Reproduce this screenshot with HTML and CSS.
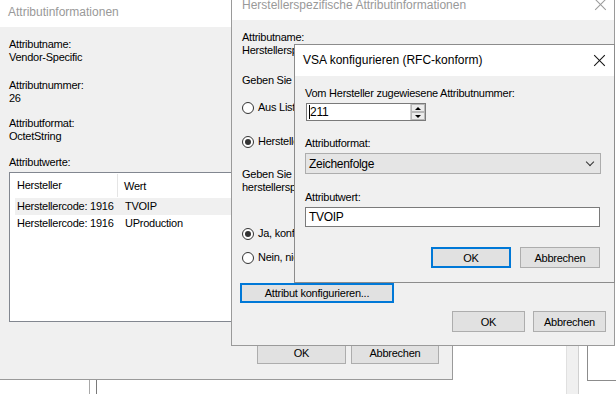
FILE: index.html
```html
<!DOCTYPE html>
<html lang="de">
<head>
<meta charset="utf-8">
<title>VSA konfigurieren</title>
<link rel="stylesheet" href="styles.css">
</head>
<body>
<div class="desk">
  <div class="deco deco-a"></div>
  <div class="deco deco-b"></div>
  <div class="deco deco-c"></div>

  <section class="win win1">
    <header class="title inactive">Attributinformationen</header>
    <div class="body body1">
      <div class="group"><div>Attributname:</div><div>Vendor-Specific</div></div>
      <div class="group g2"><div>Attributnummer:</div><div>26</div></div>
      <div class="group g3"><div>Attributformat:</div><div>OctetString</div></div>
      <div class="group g4"><div>Attributwerte:</div></div>
      <div class="listbox">
        <div class="lv-head"><span class="c1 hsep">Hersteller</span><span class="c2">Wert</span></div>
        <div class="lv-row sel"><span class="c1">Herstellercode: 1916</span><span class="c2">TVOIP</span></div>
        <div class="lv-row"><span class="c1">Herstellercode: 1916</span><span class="c2">UProduction</span></div>
      </div>
      <div class="btnrow row1">
        <button class="btn w89">OK</button>
        <button class="btn w88">Abbrechen</button>
      </div>
    </div>
  </section>

  <section class="win win2">
    <header class="title inactive">Herstellerspezifische Attributinformationen<span class="close dim"></span></header>
    <div class="body body2">
      <div class="group"><div>Attributname:</div><div>Herstellerspezifisch</div></div>
      <div class="line l-geben1">Geben Sie den Hersteller an.</div>
      <label class="radio r1"><span class="dot"></span>Aus Liste</label>
      <label class="radio r2"><span class="dot on"></span>Hersteller</label>
      <div class="group l-geben2"><div>Geben Sie an, ob</div><div>herstellerspezifisch</div></div>
      <label class="radio r3"><span class="dot on"></span>Ja, konform</label>
      <label class="radio r4"><span class="dot"></span>Nein, nicht</label>
      <button class="btn focus konfig">Attribut konfigurieren...</button>
      <div class="btnrow row2">
        <button class="btn w73">OK</button>
        <button class="btn w73">Abbrechen</button>
      </div>
    </div>
  </section>

  <section class="win win3">
    <header class="title active">VSA konfigurieren (RFC-konform)<span class="close"></span></header>
    <div class="body body3">
      <div class="line">Vom Hersteller zugewiesene Attributnummer:</div>
      <div class="spin">
        <span class="spin-val"><span class="caret"></span>211</span>
        <span class="spin-btns"><span class="sb up"></span><span class="sb down"></span></span>
      </div>
      <div class="line gap16">Attributformat:</div>
      <div class="combo"><span>Zeichenfolge</span><span class="chev"></span></div>
      <div class="line gap17">Attributwert:</div>
      <div class="textbox">TVOIP</div>
      <div class="btnrow row3">
        <button class="btn focus w80">OK</button>
        <button class="btn w80">Abbrechen</button>
      </div>
    </div>
  </section>
</div>
</body>
</html>
```

FILE: styles.css
```css
* { box-sizing: border-box; }
html, body { margin: 0; padding: 0; }
body {
  width: 616px;
  height: 394px;
  overflow: hidden;
  background: #ffffff;
  font-family: "Liberation Sans", Arial, sans-serif;
  font-size: 11px;
  letter-spacing: -0.25px;
  color: #000;
}
.desk { position: relative; width: 616px; height: 394px; overflow: hidden; }

.deco { position: absolute; }
.deco-a { left: 89px; top: 380px; width: 8px; height: 20px; border-left: 1px solid #a8a8a8; border-right: 1px solid #7a7a7a; background: #fff; }
.deco-b { left: 566px; top: 346px; width: 13px; height: 60px; border-left: 1px solid #e0e0e0; border-right: 1px solid #d0d0d0; background: #f0f0f0; }
.deco-c { left: 587px; top: 346px; width: 40px; height: 35px; border-left: 1px solid #8c8c8c; border-bottom: 1px solid #8c8c8c; background: #fff; }

.win {
  position: absolute;
  display: flex;
  flex-direction: column;
  border: 1px solid #9a9a9a;
  background: #f0f0f0;
}
.title {
  position: relative;
  background: #fff;
  font-size: 12px;
  letter-spacing: 0;
  white-space: nowrap;
  flex: none;
}
.title.inactive { color: #999; }
.title.active { color: #000; }
.body { flex: 1; display: flex; flex-direction: column; align-items: flex-start; white-space: nowrap; }
.line, .group div { line-height: 13px; height: 13px; }

.close { position: absolute; width: 11px; height: 11px; }
.close::before, .close::after {
  content: ""; position: absolute; left: -2px; top: 5px; width: 15px; height: 1px; background: #111;
}
.close::before { transform: rotate(45deg); }
.close::after { transform: rotate(-45deg); }
.close.dim::before, .close.dim::after { background: #999; }

/* window 1 */
.win1 { left: -8px; top: -4px; width: 461px; height: 384px; }
.win1 .title { height: 30px; line-height: 26px; padding-left: 15px; padding-top: 2px; }
.body1 { padding: 11px 13px 0 16px; }
.g2 { margin-top: 15px; }
.g3 { margin-top: 12px; }
.g4 { margin-top: 13px; }
.listbox {
  margin-top: 3px;
  width: 330px;
  height: 150px;
  background: #fff;
  border: 1px solid #828790;
  flex: none;
}
.lv-head { display: flex; height: 25px; align-items: center; padding-left: 7px; }
.lv-head .c1 { width: 101px; height: 23px; line-height: 23px; border-right: 1px solid #e5e5e5; }
.lv-head .c2 { padding-left: 6px; }
.lv-row { display: flex; height: 17px; line-height: 17px; margin-left: 5px; padding-left: 2px; }
.lv-row.sel { background: #f0f0f0; }
.lv-row .c1 { width: 101px; }
.lv-row .c2 { padding-left: 7px; }
.btnrow { display: flex; align-self: stretch; justify-content: flex-end; }
.row1 { margin-top: 19px; gap: 5px; }
.row1 .btn { height: 23px; }

.btn {
  font-family: inherit;
  font-size: 11px;
  letter-spacing: -0.25px;
  color: #000;
  background: #e1e1e1;
  border: 1px solid #adadad;
  padding: 0;
  margin: 0;
  height: 21px;
}
.btn.focus { border: 2px solid #0078d7; }
.w89 { width: 89px; }
.w88 { width: 88px; }
.w73 { width: 73px; }
.w80 { width: 80px; }

/* window 2 */
.win2 { left: 231px; top: -10px; width: 384px; height: 356px; }
.win2 .title { height: 29px; line-height: 29px; padding-left: 10px; padding-top: 0; }
.win2 .close { right: 8px; top: 8px; }
.body2 { padding: 11px 8px 0 10px; }
.l-geben1 { margin-top: 17px; }
.radio { display: flex; align-items: center; height: 13px; line-height: 13px; }
.dot {
  width: 12px; height: 12px; border: 1px solid #333; border-radius: 50%; background: #fff;
  margin-right: 4px; position: relative; flex: none;
}
.dot.on::after {
  content: ""; position: absolute; left: 2px; top: 2px; width: 6px; height: 6px; border-radius: 50%; background: #333;
}
.r1 { margin-top: 14px; }
.r2 { margin-top: 21px; }
.l-geben2 { margin-top: 20px; }
.r3 { margin-top: 33px; }
.r4 { margin-top: 11px; }
.konfig { margin-top: 19px; margin-left: -2px; width: 154px; height: 20px; }
.row2 { margin-top: 8px; gap: 8px; }

/* window 3 */
.win3 { left: 294px; top: 44px; width: 321px; height: 239px; border-color: #8c8c8c; }
.win3 .title { height: 31px; line-height: 31px; padding-left: 8px; }
.win3 .close { right: 9px; top: 10px; }
.body3 { padding: 11px 14px 0 10px; }
.spin {
  margin-top: 3px; margin-left: 1px; width: 120px; height: 18px;
  border: 1px solid #7a7a7a; background: #fff; display: flex;
}
.spin-val { flex: 1; position: relative; padding-left: 3px; line-height: 16px; font-size: 12px; }
.caret { position: absolute; left: 2px; top: 1px; width: 1px; height: 14px; background: #000; }
.spin-btns { width: 15px; display: flex; flex-direction: column; border-left: 1px solid #d0d0d0; }
.sb { flex: 1; background: #ececec; border: 1px solid #b8b8b8; position: relative; }
.sb::after { content: ""; position: absolute; left: 3px; width: 0; height: 0; border-left: 3px solid transparent; border-right: 3px solid transparent; }
.sb.up::after { top: 2px; border-bottom: 3px solid #000; }
.sb.down::after { top: 2px; border-top: 3px solid #000; }
.gap16 { margin-top: 16px; }
.gap17 { margin-top: 17px; }
.combo {
  margin-top: 3px; width: 296px; height: 21px;
  background: #e5e5e5; border: 1px solid #adadad;
  display: flex; align-items: center; justify-content: space-between;
  padding-left: 3px; padding-right: 7px; font-size: 12px; letter-spacing: -0.3px;
}
.chev { width: 6px; height: 6px; border-right: 1px solid #333; border-bottom: 1px solid #333; transform: rotate(45deg); margin-top: -4px; }
.textbox {
  margin-top: 3px; width: 295px; height: 20px;
  background: #fff; border: 1px solid #7a7a7a;
  padding-left: 3px; line-height: 18px; font-size: 12px; letter-spacing: -0.3px;
}
.row3 { margin-top: 20px; gap: 9px; }
```
